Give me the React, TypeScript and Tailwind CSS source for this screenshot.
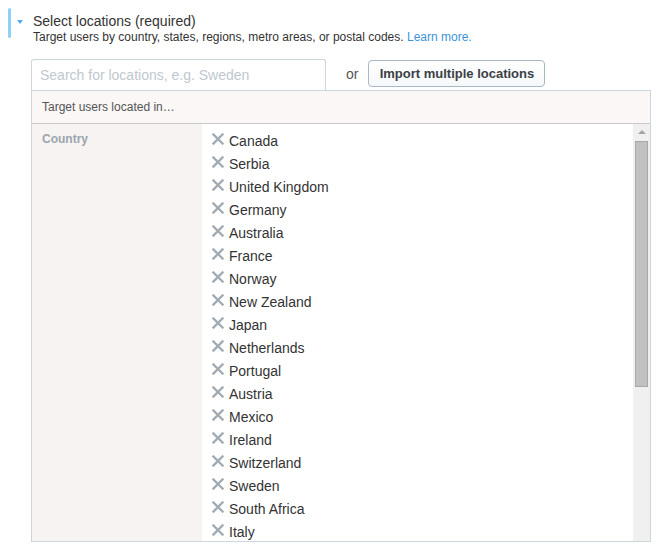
import React from 'react';

const countries = [
  'Canada',
  'Serbia',
  'United Kingdom',
  'Germany',
  'Australia',
  'France',
  'Norway',
  'New Zealand',
  'Japan',
  'Netherlands',
  'Portugal',
  'Austria',
  'Mexico',
  'Ireland',
  'Switzerland',
  'Sweden',
  'South Africa',
  'Italy',
];

const RemoveIcon = () => (
  <svg width="12" height="12" viewBox="0 0 12 12" className="shrink-0">
    <path d="M1.5 1.5 L10.5 10.5 M10.5 1.5 L1.5 10.5" stroke="#a2acb4" strokeWidth="2.4" strokeLinecap="square" />
  </svg>
);

export default function App() {
  return (
    <div className="w-[659px] h-[554px] bg-white overflow-hidden font-['Liberation_Sans',Arial,sans-serif] text-[#333]">
      {/* Section header */}
      <div className="flex pt-[8px]">
        <div className="ml-[8px] w-[3px] h-[30px] rounded-sm bg-[#8fd0f5]" />
        <div className="ml-[6px] mt-[12px] w-0 h-0 border-l-[3px] border-r-[3px] border-t-[4px] border-l-transparent border-r-transparent border-t-[#55acee]" />
        <div className="ml-[10px] mt-[5px]">
          <div className="text-[14px] leading-[16px] text-[#333]">Select locations (required)</div>
          <div className="text-[12px] leading-[14px] mt-[1px] text-[#333]">
            Target users by country, states, regions, metro areas, or postal codes.{' '}
            <span className="text-[#3b94d9]">Learn more.</span>
          </div>
        </div>
      </div>

      <div className="ml-[31px] w-[620px] mt-[15px]">
        {/* Search row */}
        <div className="flex items-center">
          <div className="w-[295px] h-[31px] border border-b-0 border-[#ccd6dd] rounded-t-[3px] flex items-center px-[8px] text-[14px] text-[#c0c8cf]">
            Search for locations, e.g. Sweden
          </div>
          <span className="ml-[20px] text-[14px] text-[#555]">or</span>
          <button className="ml-[10px] h-[27px] w-[177px] -mt-[2px] rounded-[4px] border border-[#aab8c2] bg-gradient-to-b from-white to-[#f5f8fa] text-[13px] font-bold text-[#3a4045]">
            Import multiple locations
          </button>
        </div>

        {/* Panel */}
        <div className="border border-[#ccd6dd] h-[452px] flex flex-col">
          <div className="h-[33px] bg-[#faf7f6] border-b border-[#c9c9c9] flex items-center px-[10px] text-[12px] text-[#555]">
            Target users located in…
          </div>
          <div className="flex flex-1 min-h-0">
            <div className="w-[170px] bg-[#f6f3f2] px-[10px] pt-[6px] text-[12px] font-bold text-[#9aa5ad]">Country</div>
            <div className="flex-1 overflow-hidden pl-[10px] pt-[6px]">
              {countries.map((c) => (
                <div key={c} className="flex items-center h-[23px] gap-[5px]">
                  <div className="-mt-[6px]">
                    <RemoveIcon />
                  </div>
                  <span className="text-[14px] text-[#333]">{c}</span>
                </div>
              ))}
            </div>
            {/* Scrollbar */}
            <div className="w-[17px] bg-[#f0f0f0] flex flex-col items-center">
              <div className="mt-[6px] w-0 h-0 border-l-[4px] border-r-[4px] border-b-[4px] border-l-transparent border-r-transparent border-b-[#a3a3a3]" />
              <div className="mt-[7px] w-[13px] h-[246px] bg-[#c1c1c1] border border-[#a9a9a9]" />
            </div>
          </div>
        </div>
      </div>
    </div>
  );
}
